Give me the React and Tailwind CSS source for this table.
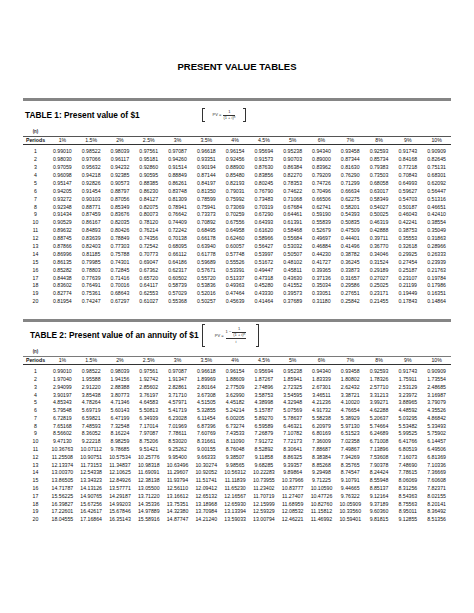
import React from 'react';

const rates = [1, 1.5, 2, 2.5, 3, 3.5, 4, 4.5, 5, 6, 7, 8, 9, 10];
const periods = Array.from({ length: 20 }, (_, i) => i + 1);

const pv = (r, n) => 1 / Math.pow(1 + r / 100, n);
const pvAnnuity = (r, n) => (1 - pv(r, n)) / (r / 100);

const font = { fontFamily: '"Liberation Sans", Arial, sans-serif' };

const Bracket = ({ right }) => (
  <span
    className={
      right
        ? 'w-[3px] border-r border-y border-[#333]'
        : 'w-[3px] border-l border-y border-[#333]'
    }
  />
);

// PV = 1 / (1 + i)^n
const FormulaOne = () => (
  <div className="flex h-[14px] w-[44px]">
    <Bracket />
    <div className="flex flex-1 items-center justify-center gap-[2px] text-[4px] leading-none text-[#333]">
      <span>PV =</span>
      <div className="flex flex-col items-center">
        <span className="pb-[0.5px]">1</span>
        <span className="border-t-[0.5px] border-[#333] pt-[0.5px]">
          (1 + i)<sup className="text-[3px]">n</sup>
        </span>
      </div>
    </div>
    <Bracket right />
  </div>
);

// PV = [1 - 1/(1+i)^n] / i
const FormulaTwo = () => (
  <div className="flex h-[23px] w-[57px]">
    <Bracket />
    <div className="flex flex-1 items-center justify-center gap-[2px] text-[4px] leading-none text-[#333]">
      <span className="pt-[1px]">PV =</span>
      <div className="flex flex-col items-center">
        <div className="flex items-center gap-[1px] pb-[0.5px]">
          <span>1 −</span>
          <div className="flex flex-col items-center">
            <span className="pb-[0.5px]">1</span>
            <span className="border-t-[0.5px] border-[#333] px-[1px] pt-[0.5px]">
              (1 + i)<sup className="text-[3px]">n</sup>
            </span>
          </div>
        </div>
        <span className="w-full border-t-[0.5px] border-[#333] pt-[1px] text-center">i</span>
      </div>
    </div>
    <Bracket right />
  </div>
);

const Table = ({ title, formula, titlePad, headerH, rowH, topLine, calc }) => (
  <div>
    <div className="h-[3px] bg-[#858585]" />
    <div className={`flex items-center ${headerH}`}>
      <div className={`w-[179px] ${titlePad} text-[8.3px] font-bold leading-none text-black`}>
        {title}
      </div>
      {formula}
    </div>
    <div className="flex h-[7px] items-center">
      <span className="w-[25px] text-center text-[4.5px] font-bold leading-none text-[#333]">(n)</span>
    </div>
    <div className={`h-px ${topLine}`} />
    <div className="grid h-[7px] grid-cols-[25px_repeat(14,minmax(0,1fr))] items-center text-[5.2px] leading-none text-[#111]">
      <span className="text-center font-bold">Periods</span>
      {rates.map((r) => (
        <span key={r} className="text-center">
          {r}%
        </span>
      ))}
    </div>
    <div className="h-px bg-[#333]" />
    <div className="pt-[3px]">
      {periods.map((n) => (
        <div
          key={n}
          className={`grid ${rowH} grid-cols-[25px_repeat(14,minmax(0,1fr))] items-center text-[5.2px] leading-none text-[#111]`}
        >
          <span className="text-center">{n}</span>
          {rates.map((r) => (
            <span key={r} className="text-center">
              {calc(r, n).toFixed(5)}
            </span>
          ))}
        </div>
      ))}
    </div>
  </div>
);

const App = () => {
  return (
    <div className="min-h-screen w-full bg-white px-[23px]" style={font}>
      <h1 className="pt-[61px] text-center text-[9.5px] font-bold leading-[12px] text-black">
        PRESENT VALUE TABLES
      </h1>

      <div className="mt-[25px]">
        <Table
          title="TABLE 1:  Present value of $1"
          formula={<FormulaOne />}
          titlePad="pl-[2px]"
          headerH="h-[28px]"
          rowH="h-[7.9px]"
          topLine="bg-[#555]"
          calc={pv}
        />
      </div>

      <div className="mt-[13px]">
        <Table
          title="TABLE 2:  Present value of an annuity of $1"
          formula={<FormulaTwo />}
          titlePad="pl-[7px]"
          headerH="h-[27px]"
          rowH="h-[7.8px]"
          topLine="bg-[#7a7a7a] h-[1.5px]"
          calc={pvAnnuity}
        />
      </div>
    </div>
  );
};

export default App;
